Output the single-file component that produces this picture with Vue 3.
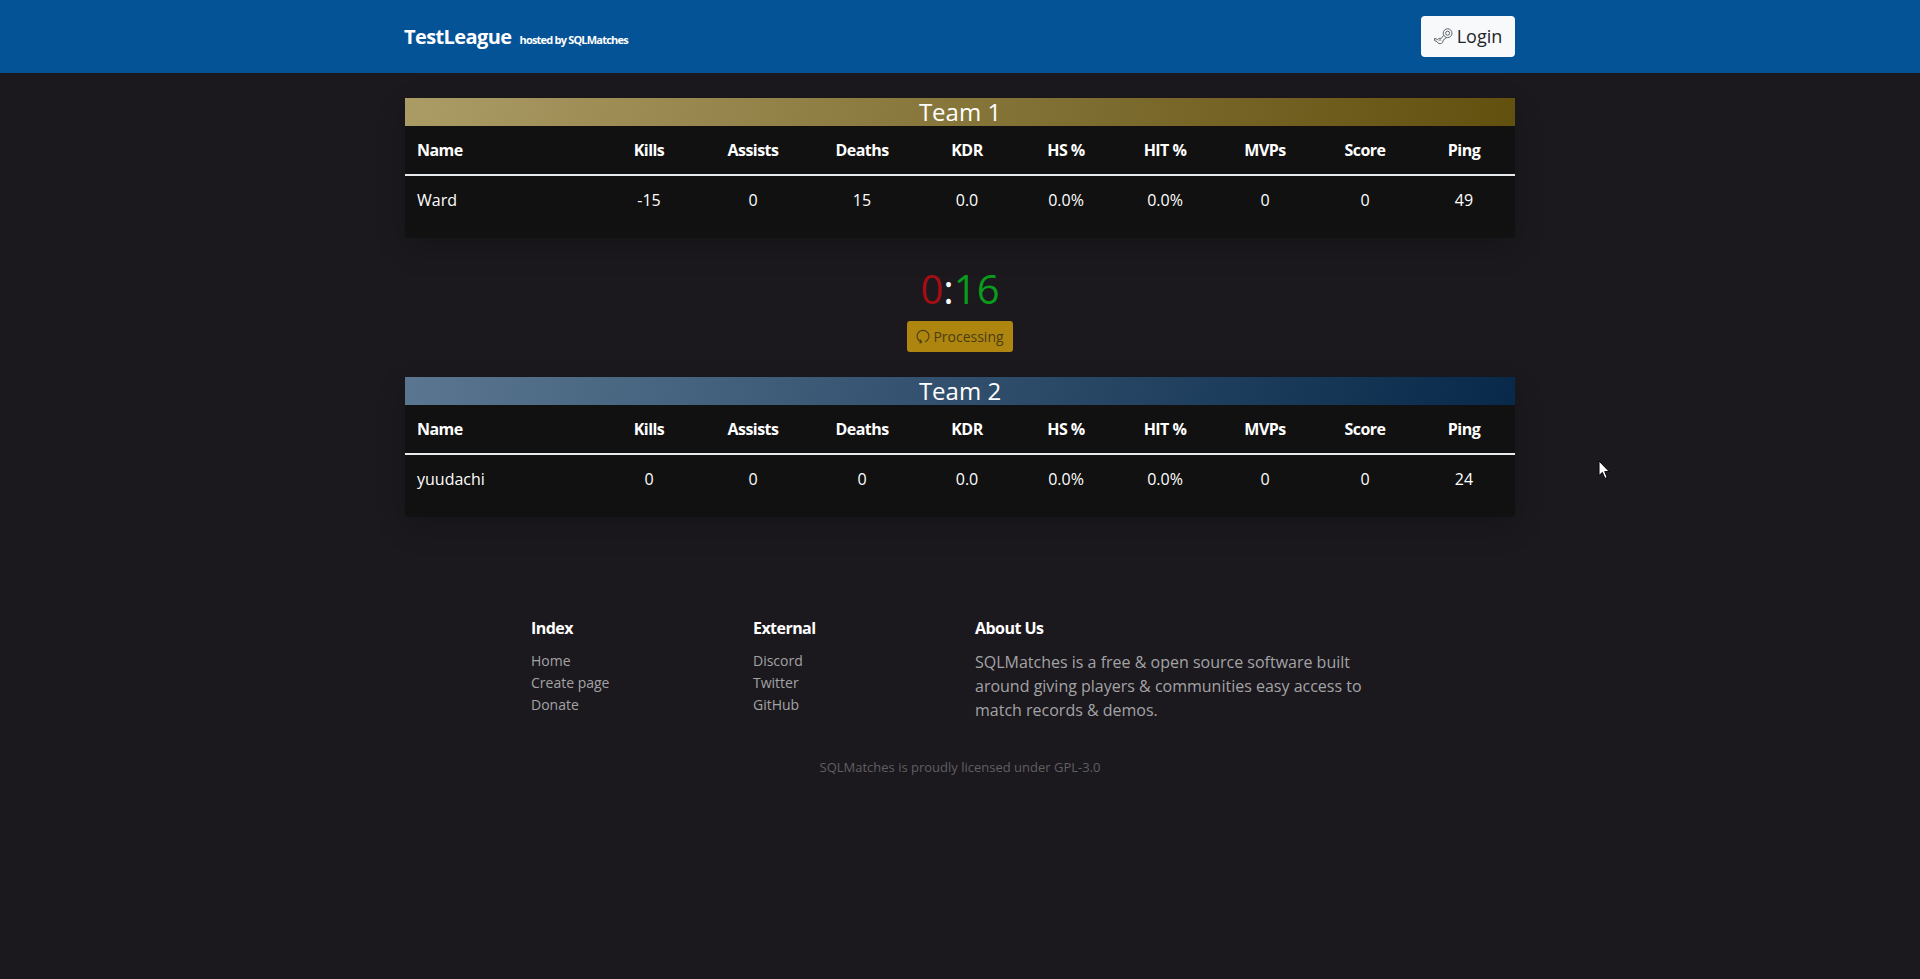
<script setup>
const columns = ['Kills', 'Assists', 'Deaths', 'KDR', 'HS %', 'HIT %', 'MVPs', 'Score', 'Ping']
const colWidths = [192, 104, 104, 114, 96, 102, 96, 104, 96, 102]

const team1 = [{ name: 'Ward', stats: ['-15', '0', '15', '0.0', '0.0%', '0.0%', '0', '0', '49'] }]
const team2 = [{ name: 'yuudachi', stats: ['0', '0', '0', '0.0', '0.0%', '0.0%', '0', '0', '24'] }]

const teams = [
  { title: 'Team 1', cls: 'gold', players: team1 },
  { title: 'Team 2', cls: 'blue', players: team2 }
]

const indexLinks = ['Home', 'Create page', 'Donate']
const externalLinks = ['Discord', 'Twitter', 'GitHub']
</script>

<template>
  <div class="page">
    <header class="navbar">
      <div class="container nav-inner">
        <div class="brand">
          <span class="brand-name">TestLeague</span>
          <span class="brand-sub">hosted by SQLMatches</span>
        </div>
        <button class="login">
          <svg class="steam" width="19" height="17" viewBox="0 0 19 17" fill="none" stroke="#4a5260" stroke-width="0.9">
            <circle cx="13.6" cy="5.2" r="4.4" />
            <circle cx="13.6" cy="5.2" r="2" />
            <path d="M9.6 7.4 7.2 10.4C5.8 10.1 4.4 10.5 3.6 11.5L.6 10.3V12.6L3 13.6C3.6 15.4 5.8 16.2 7.5 15.3 8.8 14.6 9.3 13.4 9.1 12.2L12.6 9.5" />
            <path d="M4.7 12.6C5.4 11.8 6.4 11.7 7.2 12.2" />
          </svg>
          Login
        </button>
      </div>
    </header>

    <main class="container">
      <template v-for="(team, i) in teams" :key="team.title">
        <section class="team-card">
          <div class="team-title" :class="team.cls">{{ team.title }}</div>
          <table>
            <colgroup>
              <col v-for="(w, c) in colWidths" :key="c" :style="{ width: w + 'px' }" />
            </colgroup>
            <thead>
              <tr>
                <th class="name">Name</th>
                <th v-for="col in columns" :key="col">{{ col }}</th>
              </tr>
            </thead>
            <tbody>
              <tr v-for="p in team.players" :key="p.name">
                <td class="name">{{ p.name }}</td>
                <td v-for="(s, n) in p.stats" :key="n">{{ s }}</td>
              </tr>
            </tbody>
          </table>
        </section>

        <div v-if="i === 0" class="score-block">
          <div class="score"><span class="lost">0</span><span class="colon">:</span><span class="won">16</span></div>
          <div class="status">
            <svg width="14" height="15" viewBox="0 0 14 15" fill="none" stroke="#4b3d12" stroke-width="1.1">
              <path d="M5.4 12.9A5.9 5.9 0 1 1 9 12.8" />
              <path d="M4 10.7 5.7 13 3.5 14.2" />
            </svg>
            Processing
          </div>
        </div>
      </template>
    </main>

    <footer class="container footer">
      <div class="footer-cols">
        <div class="footer-col">
          <h5>Index</h5>
          <a v-for="l in indexLinks" :key="l">{{ l }}</a>
        </div>
        <div class="footer-col">
          <h5>External</h5>
          <a v-for="l in externalLinks" :key="l">{{ l }}</a>
        </div>
        <div class="about">
          <h5>About Us</h5>
          <p>SQLMatches is a free &amp; open source software built around giving players &amp; communities easy access to match records &amp; demos.</p>
        </div>
      </div>
      <p class="license">SQLMatches is proudly licensed under GPL-3.0</p>
    </footer>

    <svg class="cursor" width="13" height="20" viewBox="0 0 13 20">
      <path d="M1 1V15.5L4.4 12.4 6.9 18.4 9.2 17.4 6.7 11.6H11.2Z" fill="#fff" stroke="#000" stroke-width="1" />
    </svg>
  </div>
</template>

<style>
html, body {
  margin: 0;
  background: #1b191d;
}
</style>

<style scoped>
.page {
  min-height: 979px;
  background: #1b191d;
  color: #fff;
  font-family: "Open Sans", "Noto Sans", sans-serif;
  font-size: 16px;
  position: relative;
  overflow: hidden;
}

.container {
  width: 1110px;
  margin: 0 auto;
}

.navbar {
  height: 73px;
  background: #055397;
}

.nav-inner {
  height: 73px;
  display: flex;
  align-items: center;
  justify-content: space-between;
}

.brand {
  display: flex;
  align-items: baseline;
  gap: 8px;
  margin-left: -1px;
}

.brand-name {
  font-size: 20px;
  font-weight: 700;
  letter-spacing: -0.6px;
}

.brand-sub {
  font-size: 11px;
  font-weight: 700;
  letter-spacing: -0.8px;
}

.login {
  width: 94px;
  height: 41px;
  margin-top: -1px;
  display: flex;
  align-items: center;
  justify-content: center;
  gap: 4px;
  border: none;
  border-radius: 4px;
  background: #f8f9fa;
  color: #212529;
  font-family: inherit;
  font-size: 18px;
  padding: 0;
}

main {
  padding-top: 25px;
}

.team-card {
  background: #111111;
  box-shadow: 0 10px 30px rgba(0, 0, 0, 0.2);
  border-radius: 0 0 4px 4px;
  height: 140px;
}

.team-title {
  height: 28px;
  line-height: 28px;
  text-align: center;
  font-size: 24px;
}

.gold {
  background: linear-gradient(100deg, #ab9b65, #62500f);
}

.blue {
  background: linear-gradient(100deg, #5a7690, #08294a);
}

table {
  width: 1110px;
  table-layout: fixed;
  border-collapse: collapse;
}

th, td {
  text-align: center;
  padding: 0;
  font-size: 16px;
}

th {
  height: 48px;
  font-weight: 700;
  letter-spacing: -0.55px;
  border-bottom: 2px solid #e9ecef;
}

td {
  height: 48px;
  padding-bottom: 2px;
  font-weight: 400;
}

.name {
  text-align: left;
  padding-left: 12px;
}

.score-block {
  height: 139px;
  display: flex;
  flex-direction: column;
  align-items: center;
}

.score {
  margin-top: 21px;
  height: 60px;
  line-height: 60px;
  font-size: 40px;
}

.lost {
  color: #a30e14;
}

.won {
  color: #0a9a1c;
}

.status {
  margin-top: 2px;
  width: 106px;
  height: 31px;
  display: flex;
  align-items: center;
  justify-content: center;
  gap: 3px;
  background: #ad850f;
  border-radius: 3px;
  color: #4b3d12;
  font-size: 14px;
}

.footer {
  padding-top: 99px;
}

.footer-cols {
  display: flex;
  padding-left: 126px;
}

.footer-col {
  width: 222px;
  display: flex;
  flex-direction: column;
}

h5 {
  margin: 0 0 10px;
  font-size: 16px;
  line-height: 24px;
  font-weight: 700;
  letter-spacing: -0.55px;
}

.footer-col a {
  font-size: 14px;
  line-height: 22px;
  color: #a3a3a6;
}

.about {
  width: 400px;
}

.about p {
  margin: 0;
  font-size: 16px;
  line-height: 24px;
  color: #a3a3a6;
}

.license {
  margin: 36px 0 0;
  text-align: center;
  font-size: 13px;
  color: #5f5f63;
}

.cursor {
  position: absolute;
  left: 1598px;
  top: 460px;
}
</style>
